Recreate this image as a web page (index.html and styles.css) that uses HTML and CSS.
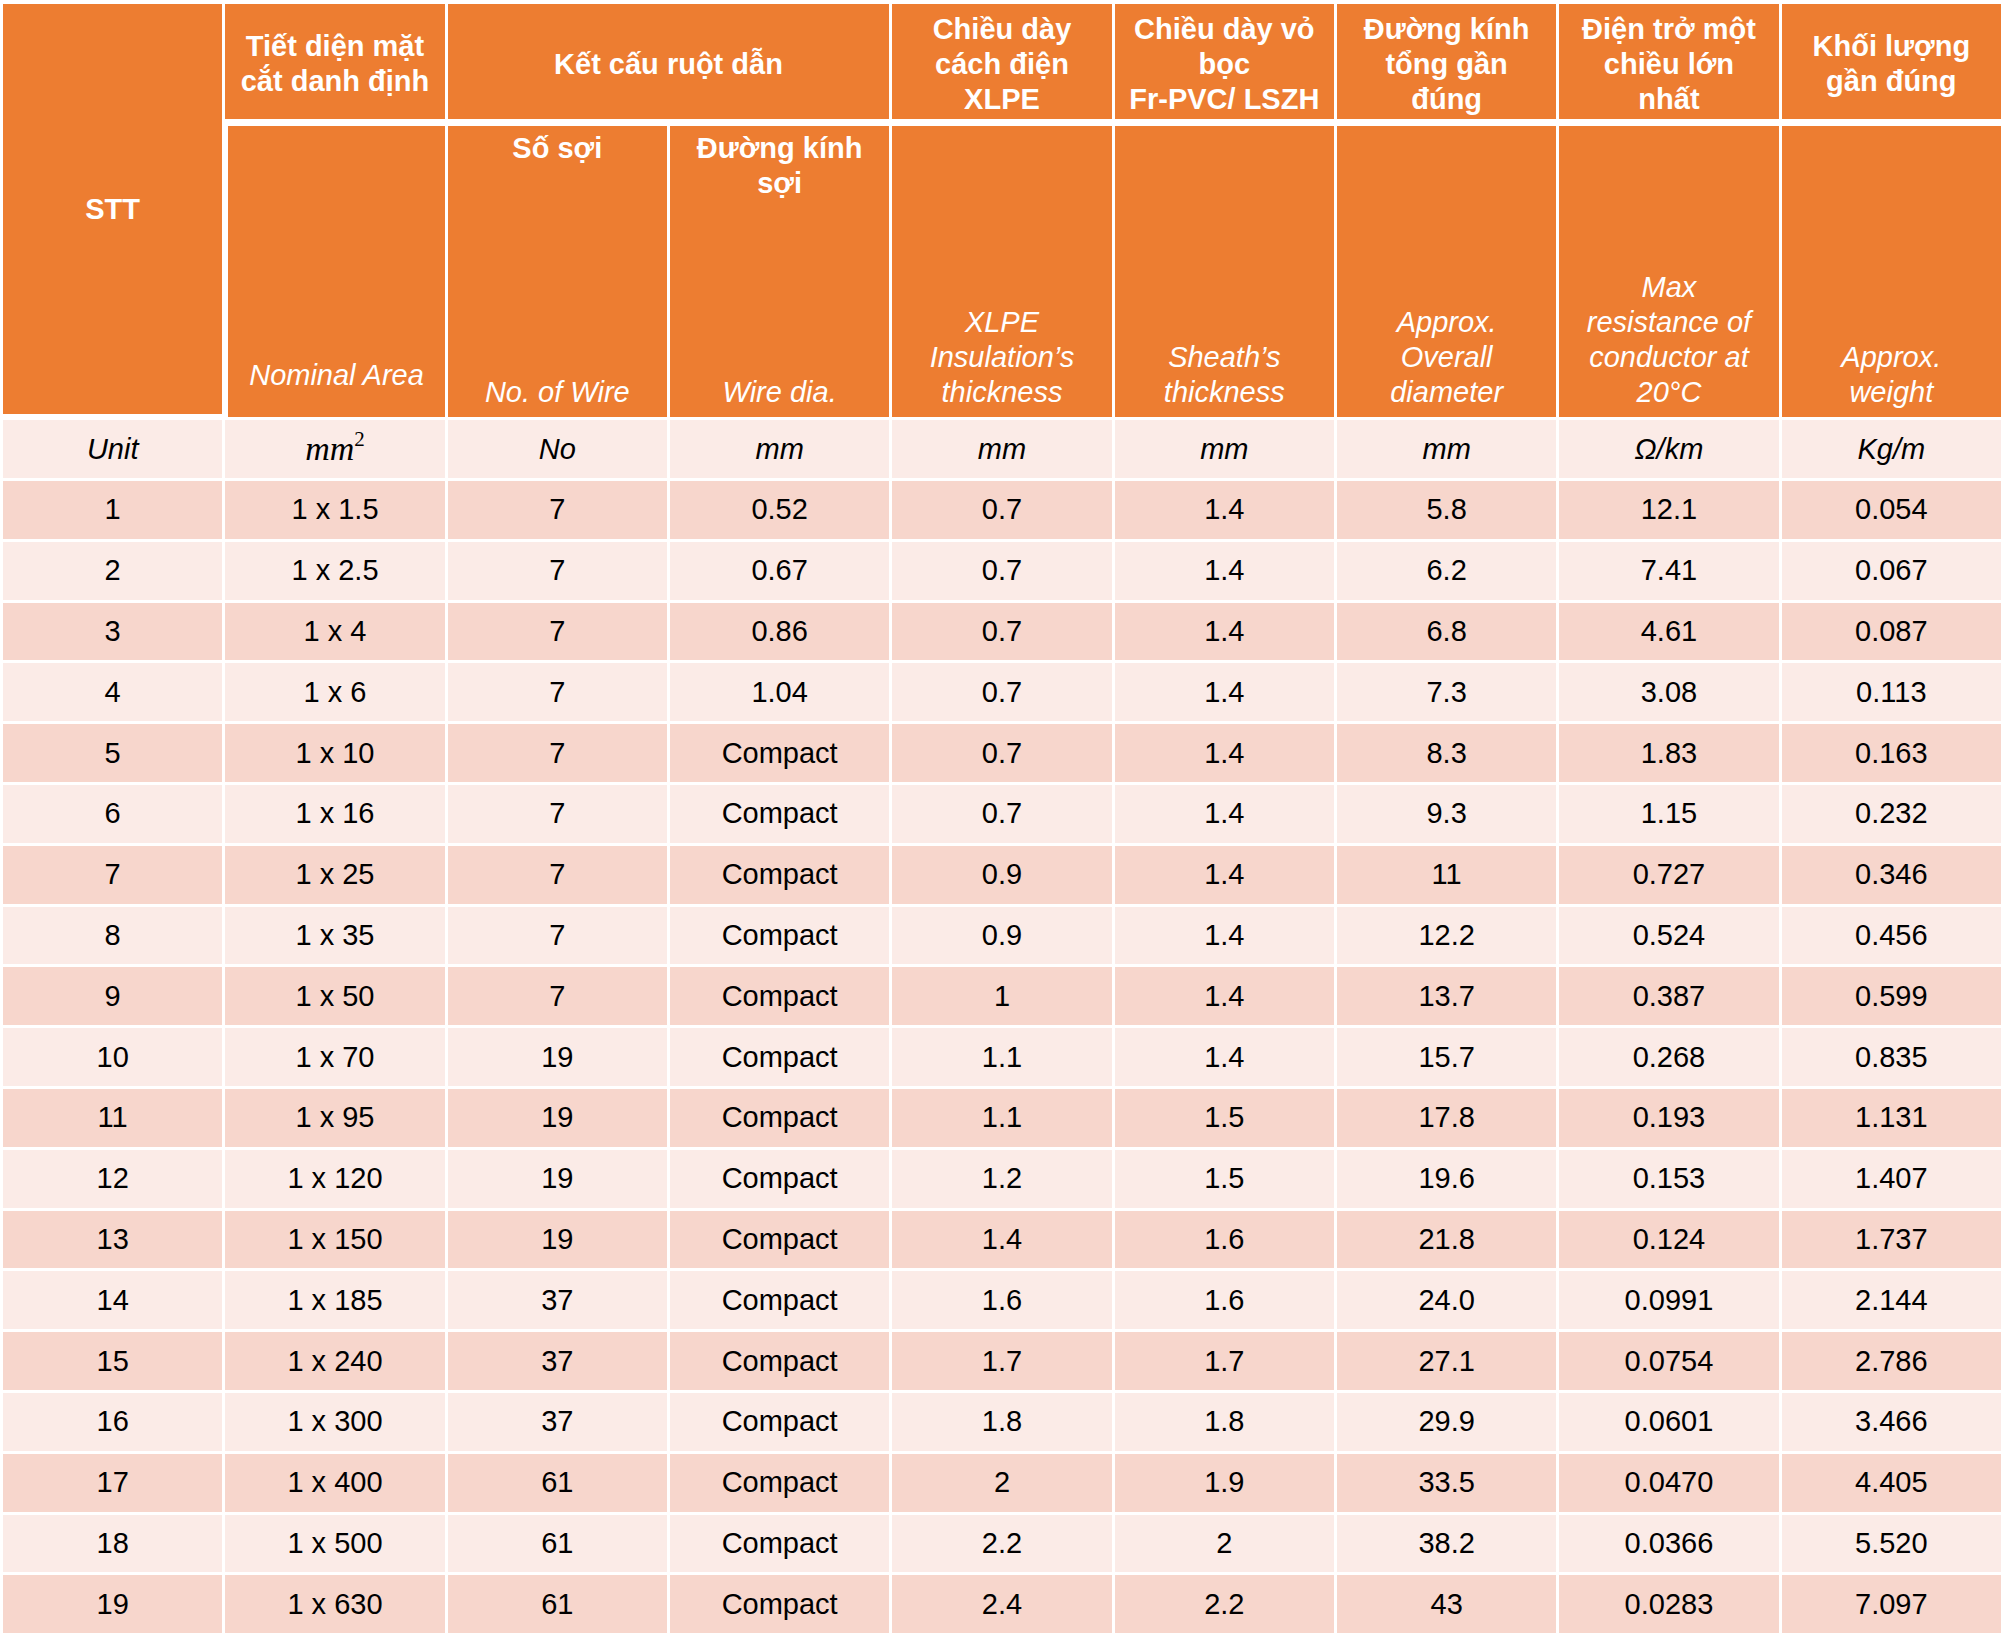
FILE: index.html
```html
<!DOCTYPE html>
<html lang="vi">
<head>
<meta charset="utf-8">
<title>Thông số kỹ thuật cáp</title>
<link rel="stylesheet" href="styles.css">
</head>
<body>
<table class="spec">
  <colgroup>
    <col><col><col><col><col><col><col><col><col>
  </colgroup>
  <thead>
    <tr class="head-top">
      <th rowspan="2" class="stt">STT</th>
      <th class="group">Tiết diện mặt<br>cắt danh định</th>
      <th class="group" colspan="2">Kết cấu ruột dẫn</th>
      <th class="group">Chiều dày<br>cách điện<br>XLPE</th>
      <th class="group">Chiều dày vỏ<br>bọc<br>Fr-PVC/ LSZH</th>
      <th class="group">Đường kính<br>tổng gần<br>đúng</th>
      <th class="group">Điện trở một<br>chiều lớn<br>nhất</th>
      <th class="group">Khối lượng<br>gần đúng</th>
    </tr>
    <tr class="head-sub">
      <th class="sub sub-first"><div class="sub-inner"><span class="en en-raise">Nominal Area</span></div></th>
      <th class="sub"><div class="sub-inner"><span class="vi">Số sợi</span><span class="en">No. of Wire</span></div></th>
      <th class="sub"><div class="sub-inner"><span class="vi">Đường kính<br>sợi</span><span class="en">Wire dia.</span></div></th>
      <th class="sub"><div class="sub-inner"><span class="en">XLPE<br>Insulation’s<br>thickness</span></div></th>
      <th class="sub"><div class="sub-inner"><span class="en">Sheath’s<br>thickness</span></div></th>
      <th class="sub"><div class="sub-inner"><span class="en">Approx.<br>Overall<br>diameter</span></div></th>
      <th class="sub"><div class="sub-inner"><span class="en">Max<br>resistance of<br>conductor at<br>20°C</span></div></th>
      <th class="sub"><div class="sub-inner"><span class="en">Approx.<br>weight</span></div></th>
    </tr>
  </thead>
  <tbody>
    <tr class="unit">
      <td>Unit</td><td><span class="math">mm<sup>2</sup></span></td><td>No</td><td>mm</td><td>mm</td><td>mm</td><td>mm</td><td>Ω/km</td><td>Kg/m</td>
    </tr>
    <tr class="dark"><td>1</td><td>1 x 1.5</td><td>7</td><td>0.52</td><td>0.7</td><td>1.4</td><td>5.8</td><td>12.1</td><td>0.054</td></tr>
    <tr class="light"><td>2</td><td>1 x 2.5</td><td>7</td><td>0.67</td><td>0.7</td><td>1.4</td><td>6.2</td><td>7.41</td><td>0.067</td></tr>
    <tr class="dark"><td>3</td><td>1 x 4</td><td>7</td><td>0.86</td><td>0.7</td><td>1.4</td><td>6.8</td><td>4.61</td><td>0.087</td></tr>
    <tr class="light"><td>4</td><td>1 x 6</td><td>7</td><td>1.04</td><td>0.7</td><td>1.4</td><td>7.3</td><td>3.08</td><td>0.113</td></tr>
    <tr class="dark"><td>5</td><td>1 x 10</td><td>7</td><td>Compact</td><td>0.7</td><td>1.4</td><td>8.3</td><td>1.83</td><td>0.163</td></tr>
    <tr class="light"><td>6</td><td>1 x 16</td><td>7</td><td>Compact</td><td>0.7</td><td>1.4</td><td>9.3</td><td>1.15</td><td>0.232</td></tr>
    <tr class="dark"><td>7</td><td>1 x 25</td><td>7</td><td>Compact</td><td>0.9</td><td>1.4</td><td>11</td><td>0.727</td><td>0.346</td></tr>
    <tr class="light"><td>8</td><td>1 x 35</td><td>7</td><td>Compact</td><td>0.9</td><td>1.4</td><td>12.2</td><td>0.524</td><td>0.456</td></tr>
    <tr class="dark"><td>9</td><td>1 x 50</td><td>7</td><td>Compact</td><td>1</td><td>1.4</td><td>13.7</td><td>0.387</td><td>0.599</td></tr>
    <tr class="light"><td>10</td><td>1 x 70</td><td>19</td><td>Compact</td><td>1.1</td><td>1.4</td><td>15.7</td><td>0.268</td><td>0.835</td></tr>
    <tr class="dark"><td>11</td><td>1 x 95</td><td>19</td><td>Compact</td><td>1.1</td><td>1.5</td><td>17.8</td><td>0.193</td><td>1.131</td></tr>
    <tr class="light"><td>12</td><td>1 x 120</td><td>19</td><td>Compact</td><td>1.2</td><td>1.5</td><td>19.6</td><td>0.153</td><td>1.407</td></tr>
    <tr class="dark"><td>13</td><td>1 x 150</td><td>19</td><td>Compact</td><td>1.4</td><td>1.6</td><td>21.8</td><td>0.124</td><td>1.737</td></tr>
    <tr class="light"><td>14</td><td>1 x 185</td><td>37</td><td>Compact</td><td>1.6</td><td>1.6</td><td>24.0</td><td>0.0991</td><td>2.144</td></tr>
    <tr class="dark"><td>15</td><td>1 x 240</td><td>37</td><td>Compact</td><td>1.7</td><td>1.7</td><td>27.1</td><td>0.0754</td><td>2.786</td></tr>
    <tr class="light"><td>16</td><td>1 x 300</td><td>37</td><td>Compact</td><td>1.8</td><td>1.8</td><td>29.9</td><td>0.0601</td><td>3.466</td></tr>
    <tr class="dark"><td>17</td><td>1 x 400</td><td>61</td><td>Compact</td><td>2</td><td>1.9</td><td>33.5</td><td>0.0470</td><td>4.405</td></tr>
    <tr class="light"><td>18</td><td>1 x 500</td><td>61</td><td>Compact</td><td>2.2</td><td>2</td><td>38.2</td><td>0.0366</td><td>5.520</td></tr>
    <tr class="dark"><td>19</td><td>1 x 630</td><td>61</td><td>Compact</td><td>2.4</td><td>2.2</td><td>43</td><td>0.0283</td><td>7.097</td></tr>
  </tbody>
</table>
</body>
</html>
```
FILE: styles.css
```css
* {
  box-sizing: border-box;
}

body {
  margin: 0;
  background: #ffffff;
  font-family: "Liberation Sans", Arial, sans-serif;
  color: #000000;
}

.spec {
  border-collapse: separate;
  border-spacing: 3px;
  table-layout: fixed;
  width: 2004px;
  margin-top: 1px;
}

.spec th,
.spec td {
  padding: 0;
  text-align: center;
  vertical-align: middle;
  font-size: 29px;
}

.spec th {
  background: #ed7d31;
  color: #ffffff;
  font-weight: bold;
  line-height: 35px;
}

.head-top {
  height: 115px;
}

.spec th.group {
  padding-top: 5px;
}

.head-sub {
  height: 295px;
}

.stt {
  border-bottom: 3px solid #ffffff;
}

.spec th.sub {
  border-top: 4px solid #ffffff;
  vertical-align: top;
}

.spec th.sub-first {
  border-left: 3px solid #ffffff;
}

.sub-inner {
  height: 291px;
  display: flex;
  flex-direction: column;
  justify-content: space-between;
  align-items: center;
  padding: 5px 4px 7px;
}

.en {
  font-weight: normal;
  font-style: italic;
  margin-top: auto;
}

.en-raise {
  padding-bottom: 17px;
}

.unit {
  height: 58px;
  background: #fbebe7;
}

.unit td {
  font-style: italic;
}

.math {
  font-family: "Liberation Serif", "Times New Roman", serif;
  font-style: italic;
  font-size: 34px;
}

.math sup {
  font-style: normal;
  font-size: 21px;
  vertical-align: 14px;
  line-height: 0;
}

.dark,
.light {
  height: 57.8px;
}

.dark {
  background: #f7d6cc;
}

.light {
  background: #fbebe7;
}
```
